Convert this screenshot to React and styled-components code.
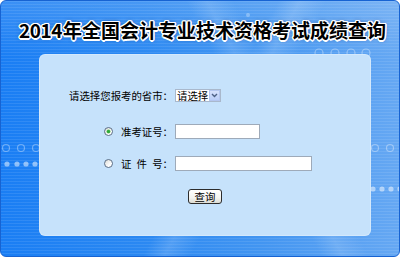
import React from "react";
import styled, { createGlobalStyle } from "styled-components";

const Global = createGlobalStyle`
  html, body { margin: 0; padding: 0; background: #ffffff; }
  body { font-family: "Noto Sans CJK SC", "Noto Sans", sans-serif; }
`;

const Frame = styled.div`
  position: relative;
  box-sizing: border-box;
  width: 400px;
  height: 257px;
  border: 1px solid #1763d2;
  border-radius: 6px;
  overflow: hidden;
  display: flex;
  flex-direction: column;
  background:
    linear-gradient(118deg, rgba(255,255,255,0) 52%, rgba(255,255,255,0.16) 56%, rgba(255,255,255,0) 61%),
    linear-gradient(62deg, rgba(255,255,255,0) 60%, rgba(255,255,255,0.14) 64%, rgba(255,255,255,0) 69%),
    repeating-linear-gradient(180deg, rgba(255,255,255,0.09) 0 1px, rgba(255,255,255,0) 1px 3px),
    linear-gradient(180deg, rgba(255,255,255,0.14) 0%, rgba(255,255,255,0) 22%),
    linear-gradient(90deg, #1a7ef4 0%, #2a88f2 35%, #4295f1 65%, #66a8f3 100%);
`;

const Decor = styled.svg`
  position: absolute;
  left: 0;
  top: 0;
  width: 400px;
  height: 257px;
  pointer-events: none;
`;

const Title = styled.h1`
  margin: 0;
  height: 53px;
  flex: none;
  display: flex;
  align-items: center;
  justify-content: center;
  padding-left: 5px;
  padding-top: 4px;
  box-sizing: border-box;
  font-family: "Noto Sans CJK SC", sans-serif;
  font-size: 19px;
  font-weight: 700;
  color: #000;
  white-space: nowrap;
  text-shadow:
    -1px -1px 0 #fff, 1px -1px 0 #fff, -1px 1px 0 #fff, 1px 1px 0 #fff,
    0 -1.5px 0 #fff, 0 1.5px 0 #fff, -1.5px 0 0 #fff, 1.5px 0 0 #fff,
    0 0 4px rgba(0, 40, 110, 0.7);
`;

const Digits = styled.span`
  letter-spacing: -0.5px;
  margin-right: 1px;
`;

const Panel = styled.div`
  position: relative;
  box-sizing: border-box;
  margin-left: 38px;
  width: 332px;
  height: 182px;
  border-radius: 6px;
  background: #c6e2fb;
  box-shadow: inset 0 0 0 1px rgba(255,255,255,0.25);
  display: flex;
  flex-direction: column;
  padding-top: 34px;
`;

const Row = styled.div`
  display: flex;
  align-items: center;
  height: 15px;
  margin-top: ${(p) => p.$gap || 0}px;
`;

const LabelCell = styled.div`
  width: 134px;
  flex: none;
  display: flex;
  align-items: center;
  justify-content: flex-end;
  margin-right: 2px;
`;

const Label = styled.span`
  font-size: 10.4px;
  line-height: 12px;
  color: #000;
  white-space: nowrap;
`;

const Spread = styled.span`
  letter-spacing: 5.2px;
`;

const Radio = styled.span`
  position: relative;
  box-sizing: border-box;
  width: 9px;
  height: 9px;
  border-radius: 50%;
  border: 1px solid #5d6f86;
  background: linear-gradient(135deg, #dcdcd6 0%, #ffffff 70%);
  margin-right: 8px;
  flex: none;
  &::after {
    content: "";
    display: ${(p) => (p.$checked ? "block" : "none")};
    position: absolute;
    left: 2px;
    top: 2px;
    width: 3px;
    height: 3px;
    border-radius: 50%;
    background: #2fa83a;
    box-shadow: 0 0 0 0.5px #5fc45a;
  }
`;

const SelectWrap = styled.div`
  position: relative;
  box-sizing: border-box;
  width: 46px;
  height: 13px;
  border: 1px solid #a9b8cc;
  background: #fff;
  display: flex;
  align-items: center;
`;

const SelectText = styled.span`
  font-size: 10.4px;
  line-height: 11px;
  padding-left: 1px;
  color: #000;
  white-space: nowrap;
`;

const ArrowBox = styled.span`
  position: absolute;
  right: 0;
  top: 0;
  box-sizing: border-box;
  width: 11px;
  height: 11px;
  background: linear-gradient(180deg, #d7e2fc 0%, #b9cdf8 100%);
  border: 1px solid #b4c6ef;
  display: flex;
  align-items: center;
  justify-content: center;
`;

const TextInput = styled.input`
  box-sizing: border-box;
  width: ${(p) => p.$w}px;
  height: 15px;
  padding: 0 2px;
  margin: 0;
  border: 1px solid #9eaab9;
  background: #fff;
  font-size: 10px;
  outline: none;
`;

const ButtonRow = styled.div`
  display: flex;
  justify-content: center;
  margin-top: 18px;
`;

const QueryButton = styled.button`
  box-sizing: border-box;
  width: 34px;
  height: 15px;
  padding: 0;
  border: 1px solid #2c2c2c;
  border-radius: 3px;
  background: linear-gradient(180deg, #ffffff 0%, #f4f4f0 60%, #dcdcd4 100%);
  font-family: "Noto Sans CJK SC", sans-serif;
  font-size: 10.4px;
  line-height: 12px;
  color: #000;
  display: flex;
  align-items: center;
  justify-content: center;
`;

const ring = "rgba(255,255,255,0.35)";
const dot = "rgba(255,255,255,0.5)";

export default function App() {
  return (
    <>
      <Global />
      <Frame>
        <Decor viewBox="0 0 400 257">
          <g fill="none" stroke={ring} strokeWidth="1.2">
            <circle cx="5" cy="147" r="3.5" />
            <circle cx="20" cy="147" r="3.5" />
            <circle cx="35" cy="147" r="3.5" />
            <circle cx="374" cy="147" r="3.5" />
            <circle cx="389" cy="147" r="3.5" />
            <circle cx="318" cy="52" r="4" />
            <circle cx="334" cy="52" r="4" />
            <circle cx="350" cy="52" r="4" />
            <circle cx="365" cy="52" r="4" />
          </g>
          <g fill={dot}>
            <circle cx="6" cy="163" r="2.6" />
            <circle cx="16" cy="163" r="2.6" />
            <circle cx="25" cy="163" r="2.6" />
            <circle cx="34" cy="163" r="2.6" />
            <circle cx="372" cy="188" r="2.6" />
            <circle cx="381" cy="188" r="2.6" />
            <circle cx="390" cy="188" r="2.6" />
            <circle cx="399" cy="188" r="2.6" />
            <circle cx="247" cy="14" r="2" fill="rgba(255,255,255,0.3)" />
          </g>
        </Decor>
        <Title>
          <Digits>2014</Digits>年全国会计专业技术资格考试成绩查询
        </Title>
        <Panel>
          <Row>
            <LabelCell>
              <Label>请选择您报考的省市：</Label>
            </LabelCell>
            <SelectWrap>
              <SelectText>请选择</SelectText>
              <ArrowBox>
                <svg width="7" height="5" viewBox="0 0 7 5">
                  <path d="M1 1 L3.5 3.5 L6 1" fill="none" stroke="#4d6185" strokeWidth="1.4" />
                </svg>
              </ArrowBox>
            </SelectWrap>
          </Row>
          <Row $gap={21}>
            <LabelCell>
              <Radio $checked />
              <Label>准考证号：</Label>
            </LabelCell>
            <TextInput $w={85} />
          </Row>
          <Row $gap={17}>
            <LabelCell>
              <Radio />
              <Label>
                <Spread>证件</Spread>号：
              </Label>
            </LabelCell>
            <TextInput $w={137} />
          </Row>
          <ButtonRow>
            <QueryButton>查询</QueryButton>
          </ButtonRow>
        </Panel>
      </Frame>
    </>
  );
}
